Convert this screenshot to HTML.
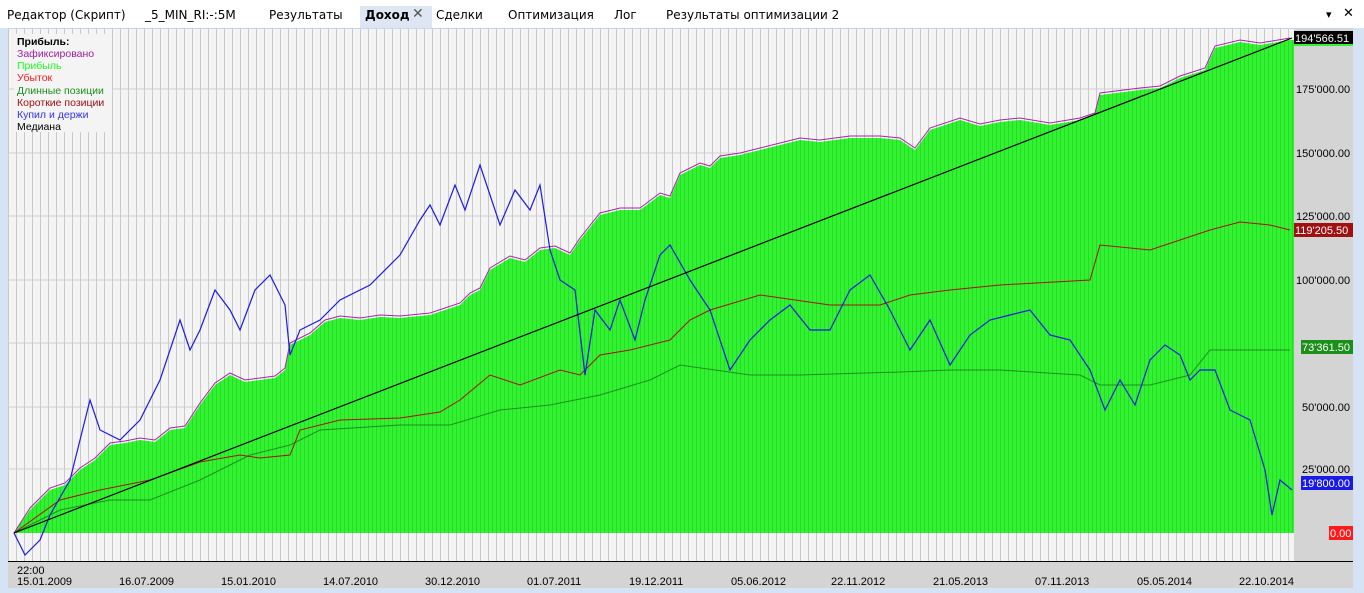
<!DOCTYPE html>
<html><head><meta charset="utf-8"><style>
body{margin:0;width:1364px;height:593px;overflow:hidden;background:#d6e3f5;font-family:"Liberation Sans","DejaVu Sans",sans-serif;}
.tabs{position:absolute;left:0;top:0;width:1364px;height:28px;background:#fff;border-bottom:1px solid #c5d5ea;}
.tab{position:absolute;top:8px;font-size:12px;color:#000;font-family:"DejaVu Sans",sans-serif;}
.act{position:absolute;left:360px;top:6px;width:72px;height:22px;background:#dde6f2;}
svg text{font-family:"Liberation Sans",sans-serif;}
</style></head><body>
<div class="tabs">
<div class="act"></div>
<div class="tab" style="left:7px">Редактор (Скрипт)</div>
<div class="tab" style="left:145px">_5_MIN_RI:-:5M</div>
<div class="tab" style="left:269px">Результаты</div>
<div class="tab" style="left:365px;font-weight:bold">Доход</div>
<div class="tab" style="left:412px;color:#555;font-size:14px;top:6px">✕</div>
<div class="tab" style="left:436px">Сделки</div>
<div class="tab" style="left:508px">Оптимизация</div>
<div class="tab" style="left:614px">Лог</div>
<div class="tab" style="left:666px">Результаты оптимизации 2</div>
<div class="tab" style="left:1326px;font-size:11px">▾</div>
<div class="tab" style="left:1343px;font-size:13px;top:6px">✕</div>
</div>
<svg width="1364" height="593" style="position:absolute;left:0;top:0" xmlns="http://www.w3.org/2000/svg">
<defs>
<pattern id="vg" x="8" y="0" width="8" height="10" patternUnits="userSpaceOnUse"><rect width="8" height="10" fill="#f4f4f4"/><rect width="1" height="10" fill="#c9c9c9"/></pattern>
<pattern id="gg" x="8" y="0" width="4" height="10" patternUnits="userSpaceOnUse"><rect width="4" height="10" fill="#33f233"/><rect width="1" height="10" fill="#22dd22"/></pattern>
</defs>
<rect x="8" y="29" width="1286" height="533" fill="url(#vg)"/>
<g stroke="#cfcfcf" stroke-width="1">
<line x1="8" x2="1294" y1="89" y2="89"/><line x1="8" x2="1294" y1="153" y2="153"/><line x1="8" x2="1294" y1="216" y2="216"/><line x1="8" x2="1294" y1="280" y2="280"/><line x1="8" x2="1294" y1="343" y2="343"/><line x1="8" x2="1294" y1="407" y2="407"/><line x1="8" x2="1294" y1="469" y2="469"/>
</g>
<polygon fill="url(#gg)" points="14,533 30,510 50,490 65,485 80,470 95,460 110,445 125,443 140,440 155,442 170,430 185,428 200,405 215,385 230,375 245,382 260,380 275,378 285,370 290,345 310,335 325,322 340,318 360,320 380,317 400,318 430,315 445,310 460,305 470,295 480,290 490,270 510,258 525,262 540,250 555,248 570,255 580,240 600,215 620,210 640,210 660,195 670,198 680,175 700,165 710,168 720,158 740,155 760,150 780,145 800,140 820,142 850,138 880,138 900,140 915,150 930,130 960,120 980,126 1000,122 1020,120 1050,125 1080,120 1095,115 1100,95 1140,90 1160,88 1180,78 1205,70 1215,48 1240,42 1260,45 1290,40 1294,40 1294,533"/>
<polyline fill="none" stroke="#aa22aa" stroke-width="1" points="14,533 30,508 50,488 65,483 80,468 95,458 110,443 125,441 140,438 155,440 170,428 185,426 200,403 215,383 230,373 245,380 260,378 275,376 285,368 290,343 310,333 325,320 340,316 360,318 380,315 400,316 430,313 445,308 460,303 470,293 480,288 490,268 510,256 525,260 540,248 555,246 570,253 580,238 600,213 620,208 640,208 660,193 670,196 680,173 700,163 710,166 720,156 740,153 760,148 780,143 800,138 820,140 850,136 880,136 900,138 915,148 930,128 960,118 980,124 1000,120 1020,118 1050,123 1080,118 1095,113 1100,93 1140,88 1160,86 1180,76 1205,68 1215,46 1240,40 1260,43 1290,38"/>
<polyline fill="none" stroke="#1f8f1f" stroke-width="1" points="14,533 60,510 110,500 150,500 200,480 250,455 290,445 320,430 400,425 450,425 500,410 550,405 600,395 650,380 680,365 750,375 800,375 900,372 950,370 1000,370 1080,375 1100,385 1150,385 1190,375 1210,350 1250,350 1290,350"/>
<polyline fill="none" stroke="#aa1111" stroke-width="1" points="14,533 60,500 100,490 150,480 200,462 240,455 260,458 290,455 300,430 340,420 400,418 440,412 460,400 490,375 520,385 560,370 580,375 600,355 630,350 670,340 690,320 710,310 760,295 830,305 880,305 910,295 950,290 1000,285 1090,280 1100,245 1150,250 1180,240 1210,230 1240,222 1270,225 1290,230"/>
<polyline fill="none" stroke="#1a1ae6" stroke-width="1.2" points="14,533 25,555 40,540 50,515 70,480 90,400 100,430 120,440 140,420 160,380 180,320 190,350 200,330 215,290 230,310 240,330 255,290 270,275 285,305 290,355 300,330 320,320 340,300 370,285 400,255 420,220 430,205 440,225 455,185 465,210 480,165 490,195 500,225 515,190 530,210 540,185 550,250 560,280 575,290 585,375 595,310 610,330 620,300 635,340 645,300 660,255 670,245 690,280 710,310 730,370 750,340 770,320 790,305 810,330 830,330 850,290 870,275 890,310 910,350 930,320 950,365 970,335 990,320 1010,315 1030,310 1050,335 1070,340 1090,370 1105,410 1120,380 1135,405 1150,360 1165,345 1180,355 1190,380 1200,370 1215,370 1230,410 1250,420 1265,470 1272,515 1280,480 1292,490"/>
<line x1="14" y1="533" x2="1292" y2="38" stroke="#000" stroke-width="1.2"/>
<rect x="1294" y="29" width="59" height="533" fill="#d4d4d4"/>
<line x1="8" x2="1353" y1="561.5" y2="561.5" stroke="#000"/>
<rect x="8" y="562" width="1345" height="26" fill="#d4d4d4"/>
<rect x="0" y="28" width="8" height="565" fill="#d6e3f5"/>
<rect x="1353" y="28" width="11" height="565" fill="#d6e3f5"/>
<rect x="0" y="588" width="1364" height="5" fill="#d6e3f5"/>
<g font-size="11" fill="#000">
<text x="1296" y="93">175'000.00</text><text x="1296" y="157">150'000.00</text><text x="1296" y="220">125'000.00</text><text x="1296" y="284">100'000.00</text><text x="1302" y="411">50'000.00</text><text x="1302" y="473">25'000.00</text>
</g>
<rect x="1294" y="31" width="59" height="15" fill="#33f233"/>
<rect x="1294" y="31" width="59" height="13" fill="#000"/><text x="1295" y="42" font-size="11" fill="#fff">194'566.51</text>
<rect x="1294" y="223" width="59" height="14" fill="#a01010"/><text x="1295" y="234" font-size="11" fill="#fff">119'205.50</text>
<rect x="1301" y="340" width="52" height="14" fill="#1a8f1a"/><text x="1302" y="351" font-size="11" fill="#fff">73'361.50</text>
<rect x="1301" y="476" width="52" height="14" fill="#1a1ae6"/><text x="1302" y="487" font-size="11" fill="#fff">19'800.00</text>
<rect x="1329" y="526" width="24" height="14" fill="#ff1a1a"/><text x="1330" y="537" font-size="11" fill="#fff">0.00</text>
<g font-size="11" fill="#000">
<text x="17" y="574">22:00</text>
<text x="17" y="585">15.01.2009</text><text x="119" y="585">16.07.2009</text><text x="221" y="585">15.01.2010</text><text x="323" y="585">14.07.2010</text><text x="425" y="585">30.12.2010</text><text x="527" y="585">01.07.2011</text><text x="629" y="585">19.12.2011</text><text x="731" y="585">05.06.2012</text><text x="831" y="585">22.11.2012</text><text x="933" y="585">21.05.2013</text><text x="1035" y="585">07.11.2013</text><text x="1137" y="585">05.05.2014</text><text x="1239" y="585">22.10.2014</text>
</g>
<rect x="14" y="34" width="98" height="98" fill="#f4f4f4"/>
<g font-size="10.5">
<text x="17" y="45" font-weight="bold" fill="#000">Прибыль:</text>
<text x="17" y="57" fill="#a020a0">Зафиксировано</text>
<text x="17" y="69" fill="#22ff22">Прибыль</text>
<text x="17" y="81" fill="#ff1a1a">Убыток</text>
<text x="17" y="94" fill="#1a8f1a">Длинные позиции</text>
<text x="17" y="106" fill="#a01010">Короткие позиции</text>
<text x="17" y="118" fill="#3333ee">Купил и держи</text>
<text x="17" y="130" fill="#000">Медиана</text>
</g>
</svg>
</body></html>
